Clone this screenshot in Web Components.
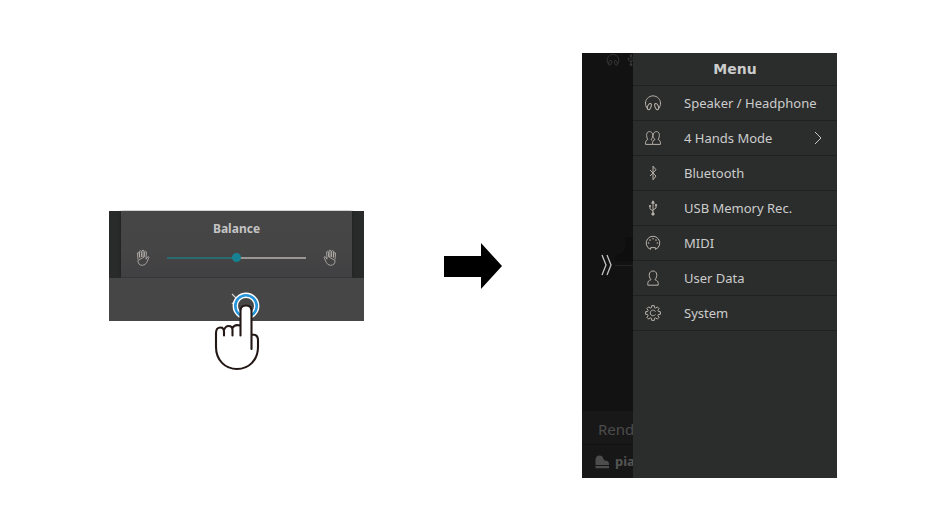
<!DOCTYPE html>
<html lang="en">
<head>
<meta charset="utf-8">
<title>Opening the menu</title>
<style>
html,body{margin:0;min-height:100vh;background:#fff}
body{font-family:"Noto Sans",sans-serif}
</style>
</head>
<body>
<guide-figure>
  <balance-panel></balance-panel>
  <step-arrow></step-arrow>
  <phone-screen>
    <menu-drawer heading="Menu">
      <menu-item icon="headphones">Speaker / Headphone</menu-item>
      <menu-item icon="people" more>4 Hands Mode</menu-item>
      <menu-item icon="bluetooth">Bluetooth</menu-item>
      <menu-item icon="usb">USB Memory Rec.</menu-item>
      <menu-item icon="midi">MIDI</menu-item>
      <menu-item icon="user">User Data</menu-item>
      <menu-item icon="gear">System</menu-item>
    </menu-drawer>
  </phone-screen>
</guide-figure>
<script>
const define = (name, render) => customElements.define(name, class extends HTMLElement {
  connectedCallback() {
    if (!this.shadowRoot) this.attachShadow({mode: 'open'}).innerHTML = render(this);
  }
});

const gearPath = (() => {
  const pts = [];
  for (let i = 0; i < 8; i++) {
    for (const [d, r] of [[-15, 5.6], [-10, 7.5], [10, 7.5], [15, 5.6]]) {
      const a = (i * 45 + d) * Math.PI / 180;
      pts.push((9 + r * Math.sin(a)).toFixed(2) + ' ' + (9 - r * Math.cos(a)).toFixed(2));
    }
  }
  return 'M' + pts.join('L') + 'Z';
})();

const icons = {
  headphones: '<path d="M3.2 14.2C.6 11 1.200 6.800 3.300 4.500C6.400 1 11.600 1 14.700 4.500C16.800 6.800 17.400 11 14.800 14.200"/><ellipse cx="5.300" cy="12.600" rx="1.700" ry="3.300" transform="rotate(22 5.300 12.600)"/><ellipse cx="12.700" cy="12.600" rx="1.700" ry="3.300" transform="rotate(-22 12.700 12.600)"/>',
  people: '<path d="M8.400 15.400H1.600C1.400 12.600 1.800 11.300 3.800 10.500C1.800 7 2.300 2.600 5.400 2.600C7 2.600 8.400 3.700 8.700 5.200M9.100 6.500C9.300 3.900 10.600 2.600 12.600 2.600C15.700 2.600 16.100 7 14.200 10.500C16.200 11.300 16.600 12.600 16.400 15.400H8.600C8.400 12.600 9 11.200 11 10.500C9.700 9 9 8.200 9.100 6.500ZM8.700 5.200C8.900 7.400 8.300 9.300 7 10.500L8.200 11.300"/>',
  bluetooth: '<path d="M6 6L12 12L9 15.800V2.200L12 5.800L6 12"/>',
  usb: '<path d="M9 3V14M9 12.200L6 9.800V7.200M9 11L12 9V6.200"/><path d="M7.700 4.200L9 1.800L10.300 4.200Z" fill="currentColor"/><circle cx="9" cy="15" r="1.200" fill="currentColor"/><circle cx="6" cy="7" r=".7" fill="currentColor"/><path d="M11.400 5.500h1.200v1.200h-1.200z" fill="currentColor"/>',
  midi: '<path d="M6.600 15.400A6.800 6.800 0 1 1 11.400 15.400V13.600H6.600Z"/><g fill="currentColor" stroke="none"><circle cx="4.600" cy="9" r=".8"/><circle cx="6" cy="6.100" r=".8"/><circle cx="9" cy="4.800" r=".8"/><circle cx="12" cy="6.100" r=".8"/><circle cx="13.400" cy="9" r=".8"/></g>',
  user: '<path d="M3.800 16.200V14.400C3.800 12.400 4.800 11.500 7 10.700C4 7.200 4.800 2 9 2C13.200 2 14 7.200 11 10.700C13.200 11.500 14.200 12.400 14.200 14.400V16.200Z"/>',
  gear: '<path d="' + gearPath + '"/><path d="M11.500 7.700A2.800 2.800 0 1 0 11.400 10.400"/>',
  hand: '<g stroke-width=".8"><path d="M4 10.500L3.400 4Q4.300 2.600 5 4L5.700 8.500L5.400 2.300Q6.400 1 7.200 2.300L7.700 8M8 8V1.700Q9 .6 9.900 1.700V8M10.200 8L10.800 2.700Q11.800 1.700 12.400 2.900L12 10.200L13.600 7.900Q14.600 7.200 15 8.300L12.800 13.300Q11.400 16.300 8.300 16.300Q4 16.300 3.900 11.500Z"/></g>',
  more: '<path d="M7 3L13 9L7 15"/>',
  piano: '<path d="M2.500 12V7Q2.500 2.500 6.500 2.500Q9.800 2.500 10.400 6Q10.800 7.600 13 7.800Q16 8.200 16 11V12ZM2.500 13H16V15.200H2.500Z" fill="currentColor" stroke="none"/>'
};

define('line-icon', el => `
<style>
:host{display:block;width:18px;height:18px;flex:none}
svg{display:block;width:100%;height:100%;fill:none;stroke:currentColor;stroke-width:1;stroke-linejoin:round}
</style>
<svg viewBox="0 0 18 18" aria-hidden="true">${icons[el.getAttribute('name')]}</svg>`);

define('guide-figure', () => `
<style>
:host{display:grid;box-sizing:border-box;min-height:100vh;padding:0 109px 1px;align-items:center;
grid-template-columns:minmax(0,255fr) minmax(0,58fr) minmax(0,255fr);column-gap:80px}
</style><slot></slot>`);

define('step-arrow', () => `
<style>:host{display:block}svg{display:block;width:100%}</style>
<svg viewBox="0 0 58 46" role="img" aria-label="Next"><path d="M0 13H37V0L58 23L37 46V34H0Z"/></svg>`);

define('balance-panel', () => `
<style>
:host{display:block;position:relative;background:#292b2b;color:#c4c4c4}
.card{margin:0 12px;padding:8px 13px 0;background:linear-gradient(#464646,#454546 60%,#404042);box-shadow:0 0 3px #1c1e1e;clip-path:inset(0 -4px)}
label{display:block;text-align:center;font-size:12px;line-height:20px;font-weight:700}
.row{display:flex;align-items:center;justify-content:space-between;height:39px}
.right{transform:scaleX(-1)}
line-icon{color:#bdb7b2}
input{flex:1;min-width:0;margin:0 15px;height:10px;appearance:none;background:none;cursor:pointer}
input::-webkit-slider-runnable-track{height:2px;background:linear-gradient(90deg,#286b70 50%,#9a9694 50%)}
input::-webkit-slider-thumb{appearance:none;width:9px;height:9px;margin-top:-4px;border-radius:50%;background:#168291}
.bar{display:flex;align-items:center;justify-content:center;height:43px;background:#464646}
button{display:block;padding:0;border:0;background:none;color:#d0d0d0;cursor:pointer}
button svg{display:block;width:14px;height:14px}
.touch{position:absolute;left:50%;top:78px;width:56px;height:86px;margin-left:-25px;pointer-events:none}
</style>
<div class="card">
  <label for="balance">Balance</label>
  <div class="row"><line-icon name="hand"></line-icon><input id="balance" type="range" min="0" max="100" value="50"><line-icon class="right" name="hand"></line-icon></div>
</div>
<div class="bar"><button aria-label="Close"><svg viewBox="0 0 14 14" fill="none" stroke="currentColor" stroke-width="1.200"><path d="M2 2L12 12M12 2L2 12"/></svg></button></div>
<svg class="touch" viewBox="0 0 56 86" aria-hidden="true">
  <circle cx="34" cy="17" r="9" fill="#464646"/>
  <circle cx="34" cy="17" r="10.700" fill="none" stroke="#fff" stroke-width="5.400"/>
  <circle cx="34" cy="17" r="10.700" fill="none" stroke="#2594d8" stroke-width="2.600"/>
  <path d="M28.500 46V22Q28.500 16.500 34 16.500T39.500 22V45.500Q46 45.500 46 51V58C46 71 37 80 25 80C13 80 4 71 4 58V44Q4 38.500 8.500 38.500Q10.500 38.500 12 39.500Q15.500 35.500 20 38Q24 34 28.500 36.500Z" fill="#fff"/>
  <path d="M12 46.500V43Q12 38.500 8.500 38.500Q4 38.500 4 44V58C4 71 13 80 25 80C37 80 46 71 46 58V51Q46 45.500 40 45.500M12 41Q13.500 37 16.500 37Q20.500 37 20.500 41V46.500M20.500 39Q22.500 35 28 36.500M28.500 46.500V22Q28.500 16.500 34 16.500T39.500 22V60" fill="none" stroke="#231815" stroke-width="2.100" stroke-linecap="round" stroke-linejoin="round"/>
</svg>`);

define('phone-screen', () => `
<style>
:host{display:grid;grid-template-columns:1fr 4fr;height:425px;background:#121212;overflow:hidden}
.behind{display:flex;flex-direction:column;min-width:0;overflow:hidden;white-space:nowrap}
.status{display:flex;gap:4px;padding:0 0 0 24px}
.status line-icon{width:14px;height:14px;color:#3d3d3d}
.scene{flex:1;display:flex;align-items:center;padding-top:52px;color:#c4c4c4}
.handle{flex:none;display:block;width:16px;height:24px;padding:0;margin:0 0 0 17px;border:0;background:none;color:inherit;cursor:pointer}
.handle svg,.shade{display:block}
.shade{flex:1;min-width:0;height:84px}
.render{height:33px;padding-left:16px;background:#181818;color:#4c4c4c;font-size:15px;line-height:36px;border-bottom:1px solid #111}
.brand{display:flex;align-items:center;gap:4px;height:33px;padding-left:11px;background:#171717;color:#555;font-size:13px;line-height:33px;font-weight:700}
.brand line-icon{color:#4d4d4d}
</style>
<div class="behind">
  <div class="status"><line-icon name="headphones"></line-icon><line-icon name="usb"></line-icon></div>
  <div class="scene">
    <button class="handle" aria-label="Close menu"><svg width="16" height="24" viewBox="0 0 16 24" fill="none" stroke="currentColor" stroke-width="1.300"><path d="M3 2L7 12L3 22M8 2L12 12L8 22"/></svg></button>
    <svg class="shade" viewBox="0 0 20 84" preserveAspectRatio="none" aria-hidden="true"><path d="M20 14H11Q14 27 7 30Q0 31 0 38H20Z" fill="#0e0e0e"/><path d="M0 42.500H20" stroke="#262626"/></svg>
  </div>
  <div class="render">Render</div>
  <div class="brand"><line-icon name="piano"></line-icon><span>piano</span></div>
</div>
<slot></slot>`);

define('menu-drawer', el => `
<style>
:host{display:block;min-width:0;background:#2b2d2c;color:#ccc}
h1{box-sizing:border-box;height:33px;margin:0;border-bottom:1px solid #202221;text-align:center;font:700 14px/32px "DejaVu Sans",sans-serif}
</style>
<h1>${el.getAttribute('heading')}</h1>
<nav><slot></slot></nav>`);

define('menu-item', el => `
<style>
:host{display:block}
button{display:flex;align-items:center;box-sizing:border-box;width:100%;height:35px;padding:0 11px;border:0;border-bottom:1px solid #202221;background:none;color:#ccc;font:13px/20px "Noto Sans",sans-serif;text-align:left;white-space:nowrap;cursor:pointer}
.label{flex:1;margin-left:22px}
line-icon{color:#b8b1aa}
.more{color:#c8c8c8}
</style>
<button><line-icon name="${el.getAttribute('icon')}"></line-icon><span class="label"><slot></slot></span>${el.hasAttribute('more') ? '<line-icon class="more" name="more"></line-icon>' : ''}</button>`);
</script>
</body>
</html>
